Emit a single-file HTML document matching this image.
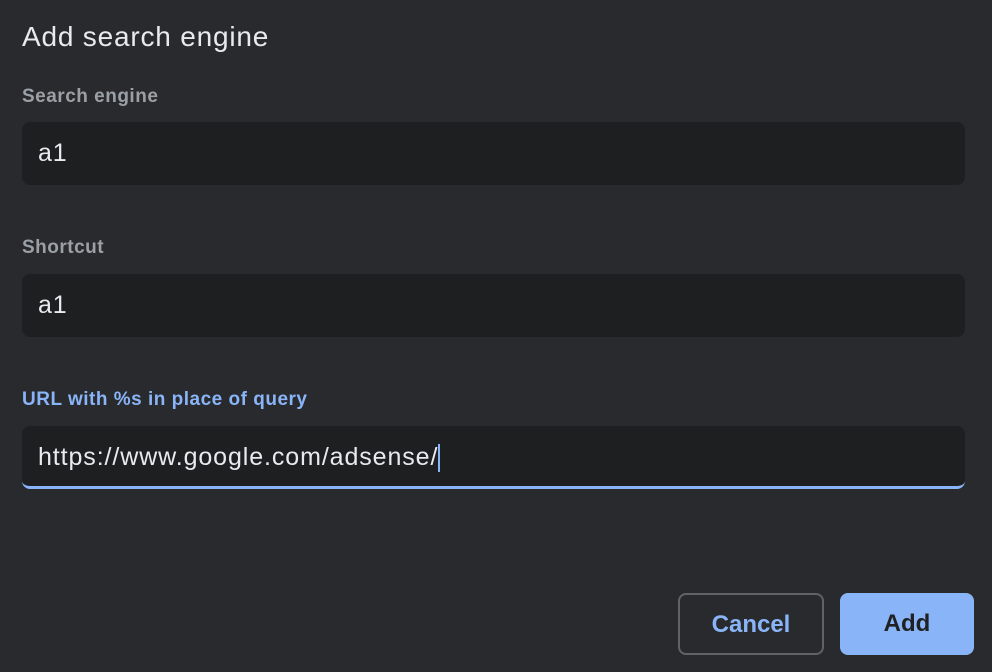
<!DOCTYPE html>
<html><head><style>
body{margin:0;width:992px;height:672px;background:#292a2d;font-family:"Liberation Sans",Arial,sans-serif;position:relative;overflow:hidden}
.t{position:absolute;left:22px;top:21px;font-size:28px;letter-spacing:0.8px;color:#e8eaed}
.l{position:absolute;left:22px;font-size:19px;letter-spacing:0.5px;font-weight:bold;color:#9aa0a6}
.i{position:absolute;left:22px;width:943px;height:63px;background:#1e1f21;border-radius:8px;box-sizing:border-box;padding-left:16px;line-height:63px;font-size:25px;letter-spacing:0.9px;color:#e8eaed}
.b{position:absolute;top:593px;height:62px;border-radius:8px;box-sizing:border-box;font-size:24px;font-weight:bold;text-align:center}
</style></head><body>
<div class="t">Add search engine</div>
<div class="l" style="top:86px">Search engine</div>
<div class="i" style="top:122px">a1</div>
<div class="l" style="top:237px">Shortcut</div>
<div class="i" style="top:274px">a1</div>
<div class="l" style="top:389px;color:#8ab4f8">URL with %s in place of query</div>
<div class="i" style="top:426px;border-bottom:3px solid #8ab4f8;line-height:62px">https://www.google.com/adsense/<span style="display:inline-block;width:2px;height:28px;background:#8ab4f8;vertical-align:middle;margin-left:0"></span></div>
<div class="b" style="left:678px;width:146px;border:2px solid #5f6368;color:#8ab4f8;line-height:60px">Cancel</div>
<div class="b" style="left:840px;width:134px;background:#8ab4f8;color:#202124;line-height:62px">Add</div>
</body></html>
